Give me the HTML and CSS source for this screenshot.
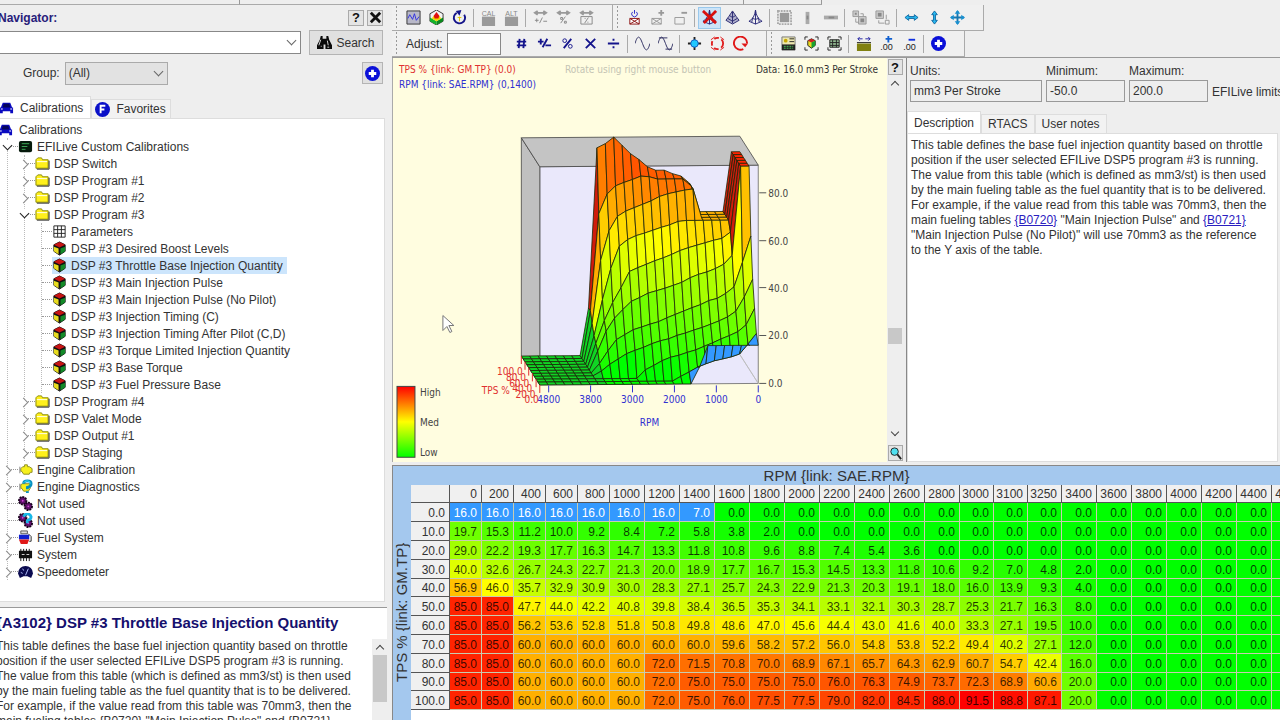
FILE: index.html
```html
<!DOCTYPE html>
<html lang="en">
<head>
  <meta charset="UTF-8" />
  <meta name="viewport" content="width=device-width, initial-scale=1.0"/>
  <title>EFILive Calibration Navigator</title>
  <link rel="stylesheet" href="styles.css">
</head>
<body>
  <!-- shared icons -->
  <svg class="sprite" width="0" height="0" aria-hidden="true">
    <symbol id="i-car" viewBox="0 0 16 16"><path d="M4 3h8l2 5h1v6h-3v-2H4v2H1V8h1z" fill="#0a0ac0"/><path d="M5 4h6l1 4H4z" fill="#05055a"/><path d="M2 9h2v1H2zM12 9h2v1h-2z" fill="#fff"/></symbol>
    <symbol id="i-board" viewBox="0 0 16 16"><rect x="1" y="2" width="14" height="12" rx="2" fill="#061a0c"/><path d="M4 5h8M4 8h6M4 11h4" stroke="#3fae5a"/></symbol>
    <symbol id="i-folder" viewBox="0 0 16 16"><path d="M1 13V4l2-2h4l1 2h6v9z" fill="#fff01c" stroke="#8a8a00"/><path d="M2 14h13V5" fill="none" stroke="#222"/><path d="M2 6h11" stroke="#fff"/></symbol>
    <symbol id="i-grid" viewBox="0 0 16 16"><path d="M2 2h12v12H2z" fill="#fff"/><path d="M2 2h12v12H2zM2 6h12M2 10h12M6 2v12M10 2v12" fill="none" stroke="#222"/></symbol>
    <symbol id="i-cube" viewBox="0 0 16 16"><path d="M8 1l6 3v7l-6 4-6-4V4z" fill="#111" stroke="#111"/><path d="M8 1l6 3-6 3-6-3z" fill="#c81414"/><path d="M2 6l5 2v6l-5-3z" fill="#e8dc20"/><path d="M9 8l5-2v5l-5 3z" fill="#128a28"/></symbol>
    <symbol id="i-engine" viewBox="0 0 16 16"><path d="M5 5h2V3h3v2h2l3 2v4h-2l-1 2H6l-2-3H3V7z" fill="#f6f01c" stroke="#8a8a20"/><path d="M2 5v7" stroke="#777"/></symbol>
    <symbol id="i-enginehelp" viewBox="0 0 16 16"><path d="M5 5h8v5l-2 3H6l-2-3H3V6z" fill="#f6f01c" stroke="#8a8a20"/><path d="M2 5v7" stroke="#777"/><path d="M6 5q0-3 4-3t4 3q0 3-4 4v2M10 13v2" fill="none" stroke="#0890c0" stroke-width="3"/><path d="M6 4q1-2 4-2t3 3" fill="none" stroke="#40e8ff"/></symbol>
    <symbol id="i-gears" viewBox="0 0 16 16"><g fill="#60106c" stroke="#18041c" stroke-width="2" stroke-dasharray="2 1"><circle cx="5" cy="5" r="4"/><circle cx="11" cy="11" r="4"/></g><circle cx="5" cy="5" r="1" fill="#d040d8"/><circle cx="11" cy="11" r="1" fill="#d040d8"/></symbol>
    <symbol id="i-gearshelp" viewBox="0 0 16 16"><use href="#i-gears"/><path d="M6 4q1-3 4-3t4 3q0 3-4 4v3" fill="none" stroke="#18b8e8" stroke-width="3"/></symbol>
    <symbol id="i-fuel" viewBox="0 0 16 16"><path d="M3 1h7v3H3z" fill="#ddd" stroke="#555"/><path d="M1 5h11v5H1z" fill="#1020d0"/><path d="M1 10h11l-2 5H3z" fill="#e01818"/><path d="M11 4l3 3v5h-2" fill="none" stroke="#222"/></symbol>
    <symbol id="i-chip" viewBox="0 0 16 16"><path d="M1 4h14v8H1z" fill="#111"/><path d="M3 2v13M6 2v13M9 2v13M12 2v13" stroke="#111"/><path d="M4 8h3M9 8h3" stroke="#ddd"/></symbol>
    <symbol id="i-gauge" viewBox="0 0 16 16"><path d="M0 10a8 8 0 1 1 16 0l-2 5-4-2H6l-4 2z" fill="#0b0b50"/><path d="M8 12l3-7M3 9l2 1M5 5l1 2" stroke="#b8c4ff"/></symbol>
    <symbol id="i-plus" viewBox="0 0 16 16"><circle cx="8" cy="8" r="8" fill="#0a10d8"/><path d="M8 4v8M4 8h8" stroke="#fff" stroke-width="3"/></symbol>
    <symbol id="i-fav" viewBox="0 0 16 16"><circle cx="8" cy="8" r="8" fill="#0a10c8"/><path d="M6 12V4h5M6 8h4" fill="none" stroke="#fff" stroke-width="2"/></symbol>
    <symbol id="i-binoc" viewBox="0 0 16 16"><path d="M4 1h2v3h4V1h2l1 4 3 6v4H9v-5H7v5H0v-4l3-6z" fill="#0a0a0a"/><path d="M2 11l2-6M11 6l1 5M4 12h1M11 13h2" stroke="#ddd"/></symbol>
    <symbol id="i-wave" viewBox="0 0 16 16"><path d="M1 1h14v14H1z" fill="#b8b8c8" stroke="#333"/><path d="M2 9l2-4 3 5 2-6 2 7 3-4" fill="none" stroke="#3030e0"/></symbol>
    <symbol id="i-map3d" viewBox="0 0 16 16"><path d="M8 0l7 4v8l-7 4-7-4V4z" fill="#f4f4f4" stroke="#333"/><path d="M1 8l7 4v4l-7-4z" fill="#14b428"/><path d="M15 8l-7 4v4l7-4z" fill="#0a8a1c"/><path d="M3 9l2-3h6l2 3-5 3z" fill="#f0d800"/><path d="M5 6l3-4 3 4-1 3H6z" fill="#e01010"/></symbol>
    <symbol id="i-refresh" viewBox="0 0 16 16"><path d="M5 3a6 6 0 1 0 8 2" fill="none" stroke="#14148a" stroke-width="2"/><path d="M4 1l6-1-2 6z" fill="#14148a"/><path d="M8 7v5M6 8h4" stroke="#e0c800"/></symbol>
    <symbol id="i-box" viewBox="0 0 16 16"><path d="M1 6h14v10H1z" fill="#9a9a9a"/></symbol>
    <symbol id="i-arrows" viewBox="0 0 16 16"><path d="M3 3h10M5 1L2 3l3 2M11 1l3 2-3 2" fill="none" stroke="#999" stroke-width="2"/></symbol>
    <symbol id="i-adjpm" viewBox="0 0 16 16"><use href="#i-arrows"/><path d="M2 11h4M4 9v4M7 14l3-6M11 12h4" stroke="#888"/></symbol>
    <symbol id="i-adjpc" viewBox="0 0 16 16"><use href="#i-arrows"/><path d="M5 14l5-7M5 8h2v2H5zM9 12h2v2H9z" fill="none" stroke="#888"/></symbol>
    <symbol id="i-adjbox" viewBox="0 0 16 16"><use href="#i-arrows"/><path d="M2 7h12v8H2zM6 14l4-6M6 9h1M9 13h1" fill="none" stroke="#888"/></symbol>
    <symbol id="i-mail" viewBox="0 0 16 16"><path d="M3 9h10v6H3zM3 9l10 6M13 9L3 15" fill="#fff" stroke="#8c1010"/><path d="M6 2a3 3 0 1 0 4 0M8 0v4" fill="none" stroke="#2828c8"/></symbol>
    <symbol id="i-mailplus" viewBox="0 0 16 16"><path d="M2 9h10v6H2zM2 9l10 6M12 9L2 15" fill="none" stroke="#999"/><path d="M12 0v6M9 3h6" stroke="#999" stroke-width="2"/></symbol>
    <symbol id="i-mailminus" viewBox="0 0 16 16"><path d="M2 8h10v7H2z" fill="none" stroke="#999"/><path d="M9 3h6" stroke="#999" stroke-width="2"/></symbol>
    <symbol id="i-cone" viewBox="0 0 16 16"><path d="M8 0Q7 9 1 12l7 3 7-3Q9 9 8 0zM8 0v15M5 8l-1 5M11 8l1 5M5 9l3 1 3-1" fill="none" stroke="#282878"/></symbol>
    <symbol id="i-cone2" viewBox="0 0 16 16"><path d="M8 1L4 7l-3 4 7 4 7-4-3-4z" fill="#b0b0cc" stroke="#282870"/><path d="M8 2v12M3 9l5 3 5-3M5 6l3 2 3-2" fill="none" stroke="#282870"/></symbol>
    <symbol id="i-conex" viewBox="0 0 16 16"><use href="#i-cone"/><path d="M1 1l14 13M15 1L2 14" stroke="#d81010" stroke-width="3"/></symbol>
    <symbol id="i-cells" viewBox="0 0 16 16"><rect x="1" y="1" width="14" height="14" fill="none" stroke="#aaa" stroke-width="2" stroke-dasharray="2 1"/><path d="M3 3h10v10H3z" fill="#999"/></symbol>
    <symbol id="i-col" viewBox="0 0 16 16"><path d="M6 2h4v13H6z" fill="#aaa"/><path d="M7 6h2v4H7z" fill="#888"/></symbol>
    <symbol id="i-row" viewBox="0 0 16 16"><path d="M1 6h15v4H1z" fill="#aaa"/><path d="M6 7h6v2H6z" fill="#888"/></symbol>
    <symbol id="i-copy" viewBox="0 0 16 16"><path d="M1 1h6v6H1zM7 7h8v8H7z" fill="#ccc" stroke="#999"/><path d="M3 3h2v2H3zM9 9h4v4H9z" fill="#888"/><path d="M4 9v4h3M9 4h3v3" fill="none" stroke="#999"/></symbol>
    <symbol id="i-copy2" viewBox="0 0 16 16"><path d="M1 1h8v8H1z" fill="#ccc" stroke="#999"/><path d="M3 3h4v4H3z" fill="#888"/><path d="M11 11h4v4h-4zM4 11v3h6M12 5v5" fill="none" stroke="#999"/></symbol>
    <symbol id="i-horiz" viewBox="0 0 16 16"><path d="M1 8l4-3v2h6V5l4 3-4 3V9H5v2z" fill="#28b8f0" stroke="#1068a0"/></symbol>
    <symbol id="i-vert" viewBox="0 0 16 16"><path d="M8 1l3 4H9v6h2l-3 4-3-4h2V5H5z" fill="#28b8f0" stroke="#1068a0"/></symbol>
    <symbol id="i-move" viewBox="0 0 16 16"><path d="M8 1v14M1 8h14" stroke="#1878b0" stroke-width="2"/><path d="M8 0l3 4H5zM8 16l3-4H5zM0 8l4-3v6zM16 8l-4-3v6z" fill="#1890d0"/></symbol>
    <symbol id="i-hash" viewBox="0 0 16 16"><path d="M6 3L5 13M11 3l-1 10M3 6h10M3 10h10" stroke="#14148c" stroke-width="2"/></symbol>
    <symbol id="i-pm" viewBox="0 0 16 16"><path d="M1 6h6M4 3v6M6 12l5-9M9 10h6" stroke="#14148c" stroke-width="2"/></symbol>
    <symbol id="i-pct" viewBox="0 0 16 16"><path d="M4 13l8-10" stroke="#14148c" stroke-width="2"/><circle cx="5" cy="5" r="2" fill="none" stroke="#14148c"/><circle cx="11" cy="11" r="2" fill="none" stroke="#14148c"/></symbol>
    <symbol id="i-mul" viewBox="0 0 16 16"><path d="M3 3l10 10M13 3L3 13" stroke="#14148c" stroke-width="2"/></symbol>
    <symbol id="i-div" viewBox="0 0 16 16"><path d="M2 8h12M7 4h2M7 12h2" stroke="#14148c" stroke-width="2"/></symbol>
    <symbol id="i-sine" viewBox="0 0 16 16"><path d="M0 8c3-10 5-8 8 0s5 10 8 0" fill="none" stroke="#28285c"/></symbol>
    <symbol id="i-sine2" viewBox="0 0 16 16"><path d="M0 8c3-10 5-8 8 0s5 10 8 0M1 2h9M8 14h7" fill="none" stroke="#28285c"/></symbol>
    <symbol id="i-target" viewBox="0 0 16 16"><path d="M8 1v14M1 8h14" stroke="#222" stroke-width="2"/><circle cx="8" cy="8" r="4" fill="#20c8ff" stroke="#1058c0"/></symbol>
    <symbol id="i-dashring" viewBox="0 0 16 16"><circle cx="8" cy="8" r="6" fill="none" stroke="#e02020" stroke-width="2" stroke-dasharray="5 3"/><path d="M1 4l4-3M15 4l-4-3M1 12l4 3M15 12l-4 3" stroke="#e02020"/></symbol>
    <symbol id="i-ring" viewBox="0 0 16 16"><path d="M11 14a7 7 0 1 1 4-6" fill="none" stroke="#e01818" stroke-width="2"/><path d="M9 8h7l-3 4z" fill="#e01818"/></symbol>
    <symbol id="i-v1" viewBox="0 0 16 16"><path d="M1 1h14v14H1z" fill="#ece7b0" stroke="#777"/><path d="M1 9h14v6H1z" fill="#222"/><path d="M3 11h10M3 13h10" stroke="#4cc85c" stroke-dasharray="2 1"/><circle cx="5" cy="5" r="2" fill="#c8a800"/><path d="M9 3h5M9 6h5" stroke="#222"/></symbol>
    <symbol id="i-v2" viewBox="0 0 16 16"><path d="M1 4V1h3M12 1h3v3M15 12v3h-3M4 15H1v-3" fill="none" stroke="#222"/><path d="M8 3l4 2v5l-4 3-4-3V5z" fill="#e8d820" stroke="#222"/><path d="M8 3l4 2-4 2-4-2z" fill="#d02020"/><path d="M8 7l4-2v5l-4 3z" fill="#18a030"/></symbol>
    <symbol id="i-v3" viewBox="0 0 16 16"><path d="M1 4V1h3M12 1h3v3M15 12v3h-3M4 15H1v-3" fill="none" stroke="#222"/><path d="M3 4h10v8H3z" fill="#90b890"/><path d="M3 4h10v8H3zM3 7h10M3 10h10M6 4v8M10 4v8" fill="none" stroke="#222"/></symbol>
    <symbol id="i-width" viewBox="0 0 16 16"><path d="M1 8h15v8H1z" fill="#808010"/><path d="M1 7h15" stroke="#222"/><path d="M2 3h5M10 3h5M4 1L2 3l2 2M13 1l2 2-2 2" fill="none" stroke="#2020a0"/></symbol>
    <symbol id="i-decadd" viewBox="0 0 16 16"><path d="M10 0v7M7 3h7" stroke="#1060d0" stroke-width="2"/></symbol>
    <symbol id="i-decsub" viewBox="0 0 16 16"><path d="M7 4h7" stroke="#1030e0" stroke-width="2"/></symbol>
    <symbol id="i-mag" viewBox="0 0 16 16"><circle cx="7" cy="6" r="4" fill="#50e0f0" stroke="#222"/><path d="M10 9l4 5" stroke="#222" stroke-width="2"/></symbol>
    <symbol id="i-close" viewBox="0 0 16 16"><path d="M3 3l10 10M13 3L3 13" stroke="#111" stroke-width="3"/></symbol>
  </svg>

  <div class="menu-strip"><span></span><span></span><span></span></div>

  <div class="app">
    <aside class="navigator">
      <div class="nav-title">
        <h1>Navigator:</h1>
        <button class="mini" aria-label="Help">?</button>
        <button class="mini" aria-label="Close"><svg class="icon"><use href="#i-close"/></svg></button>
      </div>
      <div class="nav-search">
        <div class="combo wide"><select aria-label="Search text"><option></option></select></div>
        <button class="push"><svg class="icon"><use href="#i-binoc"/></svg>Search</button>
      </div>
      <div class="nav-group">
        <label for="group">Group:</label>
        <div class="combo grey"><select id="group"><option>(All)</option></select></div>
        <button class="push square" aria-label="Add"><svg class="icon"><use href="#i-plus"/></svg></button>
      </div>
      <div class="tabs">
        <button class="tab active"><svg class="icon"><use href="#i-car"/></svg>Calibrations</button>
        <button class="tab"><svg class="icon"><use href="#i-fav"/></svg>Favorites</button>
      </div>
      <div class="tree">
        <div class="root"><svg class="icon"><use href="#i-car"/></svg>Calibrations</div>
        <ul>
          <li><div class="row open"><span class="node"><svg class="icon"><use href="#i-board"/></svg>EFILive Custom Calibrations</span></div>
            <ul>
              <li><div class="row shut"><span class="node"><svg class="icon"><use href="#i-folder"/></svg>DSP Switch</span></div></li>
              <li><div class="row shut"><span class="node"><svg class="icon"><use href="#i-folder"/></svg>DSP Program #1</span></div></li>
              <li><div class="row shut"><span class="node"><svg class="icon"><use href="#i-folder"/></svg>DSP Program #2</span></div></li>
              <li><div class="row open"><span class="node"><svg class="icon"><use href="#i-folder"/></svg>DSP Program #3</span></div>
                <ul>
                  <li><div class="row"><span class="node"><svg class="icon"><use href="#i-grid"/></svg>Parameters</span></div></li>
                  <li><div class="row"><span class="node"><svg class="icon"><use href="#i-cube"/></svg>DSP #3 Desired Boost Levels</span></div></li>
                  <li><div class="row"><span class="node selected"><svg class="icon"><use href="#i-cube"/></svg>DSP #3 Throttle Base Injection Quantity</span></div></li>
                  <li><div class="row"><span class="node"><svg class="icon"><use href="#i-cube"/></svg>DSP #3 Main Injection Pulse</span></div></li>
                  <li><div class="row"><span class="node"><svg class="icon"><use href="#i-cube"/></svg>DSP #3 Main Injection Pulse (No Pilot)</span></div></li>
                  <li><div class="row"><span class="node"><svg class="icon"><use href="#i-cube"/></svg>DSP #3 Injection Timing (C)</span></div></li>
                  <li><div class="row"><span class="node"><svg class="icon"><use href="#i-cube"/></svg>DSP #3 Injection Timing After Pilot (C,D)</span></div></li>
                  <li><div class="row"><span class="node"><svg class="icon"><use href="#i-cube"/></svg>DSP #3 Torque Limited Injection Quantity</span></div></li>
                  <li><div class="row"><span class="node"><svg class="icon"><use href="#i-cube"/></svg>DSP #3 Base Torque</span></div></li>
                  <li><div class="row"><span class="node"><svg class="icon"><use href="#i-cube"/></svg>DSP #3 Fuel Pressure Base</span></div></li>
                </ul>
              </li>
              <li><div class="row shut"><span class="node"><svg class="icon"><use href="#i-folder"/></svg>DSP Program #4</span></div></li>
              <li><div class="row shut"><span class="node"><svg class="icon"><use href="#i-folder"/></svg>DSP Valet Mode</span></div></li>
              <li><div class="row shut"><span class="node"><svg class="icon"><use href="#i-folder"/></svg>DSP Output #1</span></div></li>
              <li><div class="row shut"><span class="node"><svg class="icon"><use href="#i-folder"/></svg>DSP Staging</span></div></li>
            </ul>
          </li>
          <li><div class="row shut"><span class="node"><svg class="icon"><use href="#i-engine"/></svg>Engine Calibration</span></div></li>
          <li><div class="row shut"><span class="node"><svg class="icon"><use href="#i-enginehelp"/></svg>Engine Diagnostics</span></div></li>
          <li><div class="row"><span class="node"><svg class="icon"><use href="#i-gears"/></svg>Not used</span></div></li>
          <li><div class="row"><span class="node"><svg class="icon"><use href="#i-gearshelp"/></svg>Not used</span></div></li>
          <li><div class="row shut"><span class="node"><svg class="icon"><use href="#i-fuel"/></svg>Fuel System</span></div></li>
          <li><div class="row shut"><span class="node"><svg class="icon"><use href="#i-chip"/></svg>System</span></div></li>
          <li><div class="row shut"><span class="node"><svg class="icon"><use href="#i-gauge"/></svg>Speedometer</span></div></li>
        </ul>
      </div>
      <section class="detail">
        <h2>{A3102} DSP #3 Throttle Base Injection Quantity</h2>
        <div class="detail-body">
          <p>This table defines the base fuel injection quantity based on throttle<br>
          position if the user selected EFILive DSP5 program #3 is running.<br>
          The value from this table (which is defined as mm3/st) is then used<br>
          by the main fueling table as the fuel quantity that is to be delivered.<br>
          For example, if the value read from this table was 70mm3, then the<br>
          main fueling tables {B0720} "Main Injection Pulse" and {B0721}</p>
          <div class="scroll"><i class="arrow up"></i><i class="thumb"></i></div>
        </div>
      </section>
    </aside>

    <main class="work">
      <div class="toolbar">
        <div class="band">
          <button class="tool"><svg class="icon"><use href="#i-wave"/></svg></button>
          <button class="tool"><svg class="icon"><use href="#i-map3d"/></svg></button>
          <button class="tool"><svg class="icon"><use href="#i-refresh"/></svg></button>
          <i class="sep"></i>
          <button class="tool tagged">CAL<svg class="icon"><use href="#i-box"/></svg></button>
          <button class="tool tagged">ALT<svg class="icon"><use href="#i-box"/></svg></button>
          <i class="sep"></i>
          <button class="tool"><svg class="icon"><use href="#i-adjpm"/></svg></button>
          <button class="tool"><svg class="icon"><use href="#i-adjpc"/></svg></button>
          <button class="tool"><svg class="icon"><use href="#i-adjbox"/></svg></button>
        </div>
        <div class="band">
          <button class="tool"><svg class="icon"><use href="#i-mail"/></svg></button>
          <button class="tool"><svg class="icon"><use href="#i-mailplus"/></svg></button>
          <button class="tool"><svg class="icon"><use href="#i-mailminus"/></svg></button>
          <i class="sep"></i>
          <button class="tool on"><svg class="icon"><use href="#i-conex"/></svg></button>
          <button class="tool"><svg class="icon"><use href="#i-cone2"/></svg></button>
          <button class="tool"><svg class="icon"><use href="#i-cone"/></svg></button>
          <i class="sep"></i>
          <button class="tool"><svg class="icon"><use href="#i-cells"/></svg></button>
          <button class="tool"><svg class="icon"><use href="#i-col"/></svg></button>
          <button class="tool"><svg class="icon"><use href="#i-row"/></svg></button>
          <i class="sep"></i>
          <button class="tool"><svg class="icon"><use href="#i-copy"/></svg></button>
          <button class="tool"><svg class="icon"><use href="#i-copy2"/></svg></button>
          <i class="sep"></i>
          <button class="tool"><svg class="icon"><use href="#i-horiz"/></svg></button>
          <button class="tool"><svg class="icon"><use href="#i-vert"/></svg></button>
          <button class="tool"><svg class="icon"><use href="#i-move"/></svg></button>
        </div>
      </div>
      <div class="toolbar">
        <div class="band">
          <label class="adjust" for="adjust">Adjust:</label>
          <input id="adjust" type="text">
          <button class="tool"><svg class="icon"><use href="#i-hash"/></svg></button>
          <button class="tool"><svg class="icon"><use href="#i-pm"/></svg></button>
          <button class="tool"><svg class="icon"><use href="#i-pct"/></svg></button>
          <button class="tool"><svg class="icon"><use href="#i-mul"/></svg></button>
          <button class="tool"><svg class="icon"><use href="#i-div"/></svg></button>
          <i class="sep"></i>
          <button class="tool"><svg class="icon"><use href="#i-sine"/></svg></button>
          <button class="tool"><svg class="icon"><use href="#i-sine2"/></svg></button>
          <i class="sep"></i>
          <button class="tool"><svg class="icon"><use href="#i-target"/></svg></button>
          <button class="tool"><svg class="icon"><use href="#i-dashring"/></svg></button>
          <button class="tool"><svg class="icon"><use href="#i-ring"/></svg></button>
        </div>
        <div class="band">
          <button class="tool"><svg class="icon"><use href="#i-v1"/></svg></button>
          <button class="tool"><svg class="icon"><use href="#i-v2"/></svg></button>
          <button class="tool"><svg class="icon"><use href="#i-v3"/></svg></button>
          <i class="sep"></i>
          <button class="tool"><svg class="icon"><use href="#i-width"/></svg></button>
          <button class="tool decimal"><svg class="icon"><use href="#i-decadd"/></svg>.00</button>
          <button class="tool decimal"><svg class="icon"><use href="#i-decsub"/></svg>.00</button>
          <i class="sep"></i>
          <button class="tool"><svg class="icon"><use href="#i-plus"/></svg></button>
        </div>
      </div>

      <div class="upper">
        <section class="plot">
          <header>
            <p class="tps">TPS % {link: GM.TP} (0.0)</p>
            <p class="hint">Rotate using right mouse button</p>
            <p>Data: 16.0 mm3 Per Stroke</p>
            <p class="rpm">RPM {link: SAE.RPM} (0,1400)</p>
          </header>
          <svg id="surface" viewBox="0 0 495 367"></svg>
        </section>
        <div class="scroll tall">
          <button class="mini" aria-label="Help">?</button>
          <i class="arrow up"></i>
          <i class="thumb"></i>
          <i class="arrow down"></i>
          <button class="mini" aria-label="Zoom"><svg class="icon"><use href="#i-mag"/></svg></button>
        </div>
        <section class="info">
          <div class="fields">
            <label class="units">Units:<input value="mm3 Per Stroke" readonly></label>
            <label>Minimum:<input value="-50.0" readonly></label>
            <label>Maximum:<input value="200.0" readonly></label>
            <span>EFILive limits:</span>
          </div>
          <div class="tabs">
            <button class="tab active">Description</button>
            <button class="tab">RTACS</button>
            <button class="tab">User notes</button>
          </div>
          <p class="description">This table defines the base fuel injection quantity based on throttle<br>
          position if the user selected EFILive DSP5 program #3 is running.<br>
          The value from this table (which is defined as mm3/st) is then used<br>
          by the main fueling table as the fuel quantity that is to be delivered.<br>
          For example, if the value read from this table was 70mm3, then the<br>
          main fueling tables <a href="#B0720">{B0720}</a> "Main Injection Pulse" and <a href="#B0721">{B0721}</a><br>
          "Main Injection Pulse (No Pilot)" will use 70mm3 as the reference<br>
          to the Y axis of the table.</p>
        </section>
      </div>

      <section class="map">
        <h3>RPM {link: SAE.RPM}</h3>
        <div class="map-body">
          <div class="side">TPS % {link: GM.TP}</div>
          <div class="cells"><table id="map"></table></div>
        </div>
      </section>
    </main>
  </div>

  <script src="script.js"></script>
</body>
</html>
```
FILE: styles.css
```css
* {
  box-sizing: border-box;
}

body {
  margin: 0;
  height: 100vh;
  overflow: hidden;
  display: flex;
  flex-direction: column;
  background: #eeeeee;
  color: #333;
  font-family: "Liberation Sans", Arial, sans-serif;
  font-size: 12px;
}

h1, h2, h3, p, ul {
  margin: 0;
  padding: 0;
}

button, input, select {
  font: inherit;
  color: inherit;
  border-radius: 0;
}

button {
  padding: 0;
}

.sprite {
  position: absolute;
}

.icon {
  width: 15px;
  height: 15px;
  flex: none;
  display: block;
}

.menu-strip {
  display: flex;
  flex: none;
  height: 5px;
}

.menu-strip span {
  width: 78px;
  border-right: 1px solid #999;
  border-bottom: 1px solid #aaa;
}

.menu-strip span:first-child {
  width: 240px;
}

.menu-strip span:nth-child(2) {
  width: 504px;
}

.app {
  flex: 1;
  min-height: 0;
  display: flex;
}

/* left column */
.navigator {
  flex: none;
  width: 395px;
  margin-left: -8px;
  display: flex;
  flex-direction: column;
}

.nav-title, .nav-search, .nav-group {
  display: flex;
  align-items: center;
  padding: 0 4px 0 6px;
}

.nav-title {
  height: 25px;
  gap: 3px;
}

.nav-title h1 {
  flex: 1;
  font-size: 12px;
  color: #27207a;
}

.mini {
  width: 16px;
  height: 16px;
  display: flex;
  align-items: center;
  justify-content: center;
  border: 1px solid #aaa;
  background: #e4e4e4;
  color: #111;
  font-weight: bold;
  font-size: 13px;
}

.nav-search {
  height: 25px;
  gap: 8px;
}

.combo {
  position: relative;
  width: 103px;
  height: 23px;
}

.combo.wide {
  flex: 1;
}

.combo select {
  appearance: none;
  width: 100%;
  height: 100%;
  padding: 0 3px;
  border: 1px solid #888;
  background: #fff;
}

.combo.grey select {
  background: #e2e2e2;
  border-color: #aaa;
}

.combo::after {
  content: "";
  position: absolute;
  right: 6px;
  top: 6px;
  width: 6px;
  height: 6px;
  border: solid #666;
  border-width: 0 1px 1px 0;
  transform: rotate(45deg);
  pointer-events: none;
}

.push {
  width: 74px;
  height: 25px;
  display: flex;
  align-items: center;
  justify-content: center;
  gap: 4px;
  border: 1px solid #b4b4b4;
  background: #e0e0e0;
}

.push.square {
  width: 21px;
  height: 22px;
  margin-left: auto;
}

.nav-group {
  height: 36px;
  gap: 5px;
  padding-left: 31px;
}

.tabs {
  display: flex;
  align-items: flex-end;
  flex: none;
  height: 22px;
}

.tab {
  height: 19px;
  display: flex;
  align-items: center;
  gap: 6px;
  padding: 0 6px;
  border: 1px solid #ddd;
  border-bottom: 0;
  background: #f2f2f2;
}

.tab.active {
  height: 22px;
  background: #fff;
}

.navigator .tabs {
  margin-top: 5px;
}

.navigator .tab {
  padding: 0 4px 0 3px;
}

.navigator .tab.active {
  padding: 0 7px 0 6px;
}

.tree {
  flex: 1;
  min-height: 0;
  overflow: hidden;
  margin-right: 2px;
  padding: 2px 0 0 8px;
  background: #fff;
  border: 1px solid #ddd;
  border-left: 0;
}

.root {
  display: flex;
  align-items: center;
  gap: 6px;
  height: 17px;
  margin-left: -2px;
}

.tree ul {
  list-style: none;
  margin-left: 7px;
  border-left: 1px dotted #bbb;
}

.tree ul ul {
  margin-left: 16px;
}

.row {
  position: relative;
  display: flex;
  align-items: center;
  height: 17px;
  padding-left: 10px;
  white-space: nowrap;
}

/* dotted stub between the guide line and the icon */
.row::before {
  content: "";
  position: absolute;
  left: 0;
  top: 8px;
  width: 10px;
  border-top: 1px dotted #999;
}

.row.open::after, .row.shut::after {
  content: "";
  position: absolute;
  left: -5px;
  top: 6px;
  width: 6px;
  height: 6px;
  border: solid #888;
  border-width: 0 1px 1px 0;
  background: #fff;
  transform: rotate(-45deg);
}

.row.open::after {
  border-color: #222;
  left: -4px;
  top: 4px;
  transform: rotate(45deg);
}

.node {
  display: flex;
  align-items: center;
  gap: 4px;
  height: 17px;
  padding-right: 4px;
}

.node.selected {
  background: #cce5fc;
}

.detail {
  flex: none;
  height: 113px;
  margin-top: 5px;
  overflow: hidden;
  background: #fff;
  border-top: 1px solid #999;
  padding-left: 4px;
}

.detail h2 {
  padding: 6px 0 0;
  font-size: 15px;
  line-height: 18px;
  color: #15106e;
  white-space: nowrap;
}

.detail-body {
  display: flex;
  justify-content: space-between;
  margin-top: 7px;
  line-height: 15px;
  white-space: nowrap;
}

.scroll {
  width: 15px;
  flex: none;
  display: flex;
  flex-direction: column;
  align-items: center;
  background: #eee;
}

.arrow {
  width: 6px;
  height: 6px;
  border: solid #444;
  border-width: 1px 0 0 1px;
  transform: rotate(45deg);
  margin: 7px 0 3px;
}

.arrow.down {
  transform: rotate(225deg);
  margin: 0 0 10px;
}

.thumb {
  width: 14px;
  height: 47px;
  background: #c8c8c8;
}

/* right column */
.work {
  flex: 1;
  min-width: 0;
  margin-left: 5px;
  display: flex;
  flex-direction: column;
}

.toolbar {
  display: flex;
  flex: none;
  height: 26px;
}

.band {
  display: flex;
  align-items: center;
  padding: 0 14px 0 10px;
  border-right: 1px solid #aaa;
  border-bottom: 1px solid #aaa;
  background: radial-gradient(circle, #999 1px, transparent 1px) 3px 0 / 3px 4px no-repeat, #f0f0f0;
  background-repeat: repeat-y, repeat;
}

.tool {
  width: 23px;
  height: 22px;
  display: flex;
  align-items: center;
  justify-content: center;
  border: 0;
  background: none;
}

.tool.on {
  background: #cce4f8;
  border: 1px solid #99c8ec;
}

.tool.tagged, .tool.decimal {
  flex-direction: column;
  font-size: 7px;
  line-height: 7px;
  color: #888;
}

.tool.tagged .icon {
  margin-top: -6px;
}

.tool.decimal {
  font-size: 9px;
  color: #222;
}

.tool.decimal .icon {
  margin-bottom: -7px;
}

.sep {
  width: 1px;
  height: 18px;
  margin: 0 3px 0 2px;
  background: #aaa;
}

.adjust {
  width: 45px;
  padding-left: 4px;
}

#adjust {
  width: 54px;
  height: 22px;
  margin-right: 9px;
  border: 1px solid #888;
  background: #fff;
}

.upper {
  flex: 1;
  min-height: 0;
  display: flex;
  border-top: 1px solid #999;
  margin-bottom: 3px;
}

.plot {
  flex: 0 0 495px;
  overflow: hidden;
  background: #fffde0;
  border-left: 1px solid #aaa;
  font-family: "DejaVu Sans Condensed", "DejaVu Sans", sans-serif;
  font-size: 10px;
}

.plot header {
  display: grid;
  grid-template-columns: 166px 1fr auto;
  padding: 4px 9px 2px 6px;
  line-height: 15px;
}

.plot .tps {
  color: #e03030;
}

.plot .rpm {
  color: #3030d0;
}

.plot .hint {
  color: #c4c4b4;
}

#surface {
  display: block;
  width: 100%;
}

#surface text {
  fill: #444;
}

#surface .tps {
  fill: #e03030;
}

#surface .rpm {
  fill: #3030d0;
}

#surface path {
  stroke-linejoin: round;
}

.scroll.tall {
  width: 16px;
  padding: 1px 0;
}

.scroll.tall .thumb {
  height: 16px;
  margin: 237px 0 auto;
}

.scroll.tall .mini {
  width: 15px;
}

.info {
  flex: 1;
  min-width: 0;
  overflow: hidden;
  display: flex;
  flex-direction: column;
  margin-left: 3px;
  padding-right: 2px;
  border-left: 1px solid #888;
}

.fields {
  display: flex;
  gap: 4px;
  padding: 4px 0 0 3px;
  white-space: nowrap;
}

.fields label {
  flex: none;
  width: 79px;
  line-height: 18px;
}

.fields .units {
  width: 132px;
}

.fields input {
  display: block;
  width: 100%;
  height: 22px;
  padding: 0 3px;
  border: 1px solid #999;
  background: #eee;
}

.fields span {
  padding-top: 23px;
}

.info .tabs {
  margin-top: 9px;
}

.description {
  flex: 1;
  padding: 4px 3px 0;
  background: #fff;
  border: 1px solid #ddd;
  line-height: 15px;
  white-space: nowrap;
}

.description a {
  color: #2a20c0;
}

.map {
  flex: none;
  height: 255px;
  overflow: hidden;
  background: #a4c8ee;
  border-top: 1px solid #888;
  border-left: 1px solid #888;
}

.map h3 {
  font-size: 15px;
  font-weight: normal;
  line-height: 19px;
  text-align: center;
}

.map-body {
  display: flex;
  height: 100%;
}

.side {
  width: 18px;
  flex: none;
  writing-mode: vertical-rl;
  transform: rotate(180deg);
  text-align: center;
  font-size: 15px;
  line-height: 18px;
}

.cells {
  flex: 1;
  overflow: hidden;
  background: #fff;
}

#map {
  table-layout: fixed;
  width: 0;
  border-collapse: separate;
  border-spacing: 0;
}

#map col {
  width: 35px;
}

#map .stub {
  width: 39px;
}

#map .small {
  width: 32px;
}

#map .mid {
  width: 34px;
}

#map th, #map td {
  height: 19px;
  padding: 1px 4px 0 0;
  text-align: right;
  font-weight: normal;
  line-height: 16px;
  border: solid #c8ccb0;
  border-width: 0 1px 1px 0;
}

#map tr:nth-child(5n+1) > * {
  height: 18px;
}

#map th {
  background: #f0f0f0;
  border-color: #555;
}

#map td {
  color: rgba(0, 0, 0, 0.78);
}

#map td.picked {
  background: #3399ff;
  color: #fff;
}
```
FILE: script.js
```js
const rpm = [0, 200, 400, 600, 800, 1000, 1200, 1400, 1600, 1800, 2000, 2200, 2400, 2600,
  2800, 3000, 3100, 3250, 3400, 3600, 3800, 4000, 4200, 4400, 4600, 4800, 5000];

// one row per 10% of throttle, missing cells on the right are 0.0
const rows = [
  [16, 16, 16, 16, 16, 16, 16, 7],
  [19.7, 15.3, 11.2, 10, 9.2, 8.4, 7.2, 5.8, 3.8, 2],
  [29, 22.2, 19.3, 17.7, 16.3, 14.7, 13.3, 11.8, 10.8, 9.6, 8.8, 7.4, 5.4, 3.6],
  [40, 32.6, 26.7, 24.3, 22.7, 21.3, 20, 18.9, 17.7, 16.7, 15.3, 14.5, 13.3, 11.8, 10.6, 9.2, 7, 4.8, 2],
  [56.9, 46, 35.7, 32.9, 30.9, 30, 28.3, 27.1, 25.7, 24.3, 22.9, 21.3, 20.3, 19.1, 18, 16, 13.9, 9.3, 4],
  [85, 85, 47.7, 44, 42.2, 40.8, 39.8, 38.4, 36.5, 35.3, 34.1, 33.1, 32.1, 30.3, 28.7, 25.3, 21.7, 16.3, 8],
  [85, 85, 56.2, 53.6, 52.8, 51.8, 50.8, 49.8, 48.6, 47, 45.6, 44.4, 43, 41.6, 40, 33.3, 27.1, 19.5, 10],
  [85, 85, 60, 60, 60, 60, 60, 60, 59.6, 58.2, 57.2, 56, 54.8, 53.8, 52.2, 49.4, 40.2, 27.1, 12],
  [85, 85, 60, 60, 60, 60, 72, 71.5, 70.8, 70, 68.9, 67.1, 65.7, 64.3, 62.9, 60.7, 54.7, 42.4, 16],
  [85, 85, 60, 60, 60, 60, 72, 75, 75, 75, 75, 76, 76.3, 74.9, 73.7, 72.3, 68.9, 60.6, 20],
  [85, 85, 60, 60, 60, 60, 72, 75, 76, 77.5, 77.5, 79, 82, 84.5, 88, 91.5, 88.8, 87.1, 20]
];

const peak = 91.5;
const value = (j, i) => rows[j][i] || 0;
const picked = (j, i) => j === 0 && i < 8;

// green -> yellow -> red
function heat(v) {
  const r = Math.min(255, Math.round(v / peak * 510));
  const g = Math.min(255, Math.round((peak - v) / peak * 510));
  return `rgb(${r}, ${g}, 0)`;
}

function drawTable() {
  let html = '<colgroup><col class="stub">';
  rpm.forEach((r, i) => {
    html += i < 5 ? '<col class="small">' : i > 14 && i < 18 ? '<col class="mid">' : '<col>';
  });
  html += '</colgroup><tr><th></th>' + rpm.map(r => `<th>${r}</th>`).join('') + '</tr>';
  rows.forEach((row, j) => {
    html += `<tr><th>${(j * 10).toFixed(1)}</th>`;
    rpm.forEach((r, i) => {
      const v = value(j, i);
      html += picked(j, i)
        ? `<td class="picked">${v.toFixed(1)}</td>`
        : `<td style="background: ${heat(v)}">${v.toFixed(1)}</td>`;
    });
    html += '</tr>';
  });
  document.getElementById('map').innerHTML = html;
}

// oblique projection: i = rpm index, t = throttle %, v = value
function project(i, t, v) {
  return [366 - 8.42 * i - 0.185 * t, 290 + 0.06 * i - 0.29 * t - 2.39 * v];
}

function poly(points, fill, stroke) {
  const d = points.map(p => p.map(n => n.toFixed(1)).join(' ')).join('L');
  return `<path d="M${d}Z" fill="${fill}" stroke="${stroke}" stroke-width="0.8"/>`;
}

function drawSurface() {
  const last = rpm.length - 1;
  const c = project;
  let s = '<defs><linearGradient id="heat" x1="0" y1="0" x2="0" y2="1">' +
    '<stop offset="0" stop-color="#f00"/><stop offset="0.5" stop-color="#ff0"/><stop offset="1" stop-color="#0f0"/>' +
    '</linearGradient></defs>';

  s += poly([c(0, 0, 0), c(last, 0, 0), c(last, 0, peak), c(0, 0, peak)], '#eae8fb', '#666');
  s += poly([c(last, 0, 0), c(last, 100, 0), c(last, 100, peak), c(last, 0, peak)], '#c0c0c0', '#444');
  s += poly([c(0, 0, peak), c(last, 0, peak), c(last, 100, peak), c(0, 100, peak)], '#c4c4c4', '#444');
  s += poly([c(0, 0, 0), c(0, 100, 0)], 'none', '#bbb');

  // paint from the back row to the front row
  for (let j = 9; j >= 0; j--) {
    for (let i = last - 1; i >= 0; i--) {
      const a = value(j, i), b = value(j, i + 1);
      const far = value(j + 1, i), farB = value(j + 1, i + 1);
      let fill = heat(a);
      // steep drops are shaded as walls
      if (a - b > 15 && far - farB > 20) fill = far > 80 ? '#d01c0c' : heat(far);
      else if (i > 17) fill = '#10d424';
      if (picked(j, i)) fill = '#3399ff';
      s += poly([c(i, j * 10, a), c(i + 1, j * 10, b), c(i + 1, j * 10 + 10, farB), c(i, j * 10 + 10, far)], fill, '#1c2408');
    }
  }

  // value axis
  for (let v = 0; v <= 80; v += 20) {
    const y = Math.round(c(0, 0, v)[1]);
    s += `<path d="M367 ${y}h7" stroke="#555"/><text x="376" y="${y + 4}">${v.toFixed(1)}</text>`;
  }
  // rpm axis
  [0, 5, 10, 15, 20, 25].forEach(i => {
    const x = Math.round(c(i, 0, 0)[0]);
    s += `<path d="M${x} 292v7" stroke="#3030d0"/><text class="rpm" x="${x}" y="310" text-anchor="middle">${rpm[i]}</text>`;
  });
  s += '<text class="rpm" x="257" y="333" text-anchor="middle">RPM</text>';
  // throttle axis
  for (let t = 0; t <= 100; t += 20) {
    const p = c(last, t, 0);
    s += `<path d="M${p[0]} ${p[1]}v8" stroke="#e03030"/>`;
    s += `<text class="tps" x="${146 - 0.16 * t}" y="${310 - 0.28 * t}" text-anchor="end">${t.toFixed(1)}</text>`;
  }
  s += '<text class="tps" x="89" y="301">TPS %</text>';

  // legend
  s += '<rect x="4" y="293" width="18" height="71" fill="url(#heat)" stroke="#444"/>' +
    '<text x="27" y="303">High</text><text x="27" y="333">Med</text><text x="27" y="363">Low</text>';
  // mouse pointer
  s += '<path d="M50 222v15l4-4 3 6 2-1-3-6h5z" fill="#fff" stroke="#777"/>';
  document.getElementById('surface').innerHTML = s;
}

drawTable();
drawSurface();
```
